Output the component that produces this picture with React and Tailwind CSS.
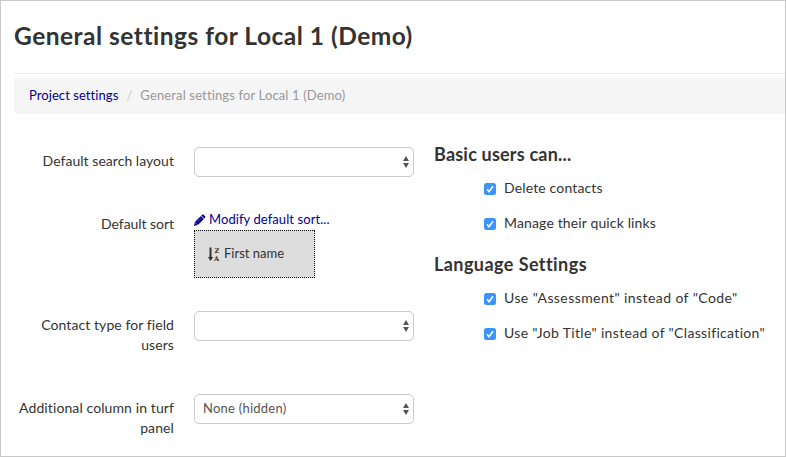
function SortIcon() {
  return (
    <svg className="h-[15px] w-[13px] shrink-0" viewBox="0 0 13 15" aria-hidden="true">
      <path d="M1.500 .500h2v9.500h1.700L2.500 14 0 10h1.500z" fill="#333" />
      <text x="6.400" y="6" className="fill-[#333] font-['DejaVu_Serif'] text-[6.5px] font-bold tracking-normal">Z</text>
      <text x="6" y="14" className="fill-[#333] font-['DejaVu_Serif'] text-[6.5px] font-bold tracking-normal">A</text>
    </svg>
  );
}

function PencilIcon() {
  return (
    <svg className="h-[12px] w-[12px] shrink-0" viewBox="0 0 12 12" fill="#00008b" aria-hidden="true">
      <path d="M8.100 .7a1 1 0 0 1 1.400 0l1.600 1.600a1 1 0 0 1 0 1.400l-.8.800-3-3z" />
      <path d="M6.900 2 9.900 5 3.900 11 .9 8z" />
      <path d="M.8 8.300 3.400 11 0 11.900z" />
      <path d="M3 8.200 7.300 3.900" stroke="#7777c4" strokeWidth=".6" />
    </svg>
  );
}

function Select({ children }) {
  return (
    <div className="flex h-[30px] w-[220px] shrink-0 items-center justify-between rounded-[5px] border border-[#ccc] bg-white pl-2 pr-[4px] text-[13px] text-[#555]">
      <span className="pb-px tracking-[0.24px]">{children}</span>
      <svg className="h-[12px] w-[6px]" viewBox="0 0 6 12" fill="#555" aria-hidden="true">
        <path d="M3 0 6 5H0zM0 7h6L3 12z" />
      </svg>
    </div>
  );
}

function Row({ label, className, labelClass, children }) {
  return (
    <div className={`flex items-start gap-5 ${className}`}>
      <div className={`w-[160px] shrink-0 pt-[4px] text-right leading-5 ${labelClass}`}>{label}</div>
      {children}
    </div>
  );
}

function Check({ children, className }) {
  return (
    <label className={`flex h-[35px] items-center gap-[8px] pl-[50px] ${className}`}>
      <svg className="mt-px h-[12px] w-[12px] shrink-0" viewBox="0 0 12 12" aria-hidden="true">
        <rect width="12" height="12" rx="2.500" fill="#3b93fb" />
        <path d="M3 6.300 5 8.700 9 3.200" fill="none" stroke="#fff" strokeWidth="1.500" />
      </svg>
      <span className="whitespace-nowrap pb-[2px]">{children}</span>
    </label>
  );
}

export default function App() {
  return (
    <div className="h-[457px] w-[786px] overflow-hidden border border-[#c8c8c8] bg-white pl-[13px] font-['Lato',sans-serif] text-[14px] text-[#333]">
      <h1 className="flex h-[72px] items-center whitespace-nowrap pb-[2px] text-[24.5px] font-bold tracking-[0.5px]">
        General settings for Local 1 (Demo)
      </h1>
      <div className="h-px bg-[#eee]" />
      <nav className="mt-1 flex h-[36px] items-center rounded-l-[4px] bg-[#f5f5f5] pl-[15px] text-[13px]">
        <a className="tracking-[0.07px] text-[#00008b]">Project settings</a>
        <span className="w-[22px] text-center text-[#ccc]">/</span>
        <span className="tracking-[0.14px] text-[#999]">General settings for Local 1 (Demo)</span>
      </nav>
      <main className="flex pt-[33px]">
        <form className="w-[420px] shrink-0">
          <Row label="Default search layout" className="h-[63px]" labelClass="tracking-[0.04px]">
            <Select />
          </Row>
          <Row label="Default sort" className="h-[101px]" labelClass="tracking-[-0.05px]">
            <div>
              <a className="flex h-[20px] items-center gap-[3px] text-[13px] tracking-[0.08px] text-[#00008b]">
                <PencilIcon />
                <span>Modify default sort...</span>
              </a>
              <div className="flex h-[48px] w-[121px] items-center gap-[3px] border border-dotted border-black bg-[#ddd] pl-[13px] text-[13px]">
                <SortIcon />
                <span>First name</span>
              </div>
            </div>
          </Row>
          <Row label="Contact type for field users" className="h-[83px]" labelClass="pl-5 tracking-[0.08px]">
            <Select />
          </Row>
          <Row label="Additional column in turf panel" className="" labelClass="tracking-[0.1px]">
            <Select>None (hidden)</Select>
          </Row>
        </form>
        <section>
          <h2 className="h-[24px] text-[18px] font-bold leading-[14px] tracking-[0.2px]">Basic users can...</h2>
          <Check className="tracking-[0.15px]">Delete contacts</Check>
          <Check className="tracking-[0.14px]">Manage their quick links</Check>
          <h2 className="mt-[16px] h-[24px] text-[18px] font-bold leading-[14px] tracking-[0.43px]">Language Settings</h2>
          <Check className="tracking-[0.42px]">Use "Assessment" instead of "Code"</Check>
          <Check className="tracking-[0.33px]">Use "Job Title" instead of "Classification"</Check>
        </section>
      </main>
    </div>
  );
}
